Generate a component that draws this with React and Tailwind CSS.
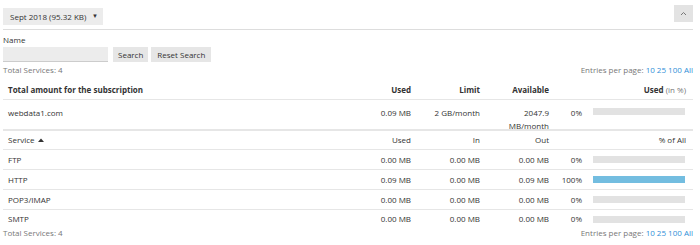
const rows = [
  { name: "FTP", used: "0.00 MB", inn: "0.00 MB", out: "0.00 MB", pct: 0 },
  { name: "HTTP", used: "0.09 MB", inn: "0.00 MB", out: "0.09 MB", pct: 100 },
  { name: "POP3/IMAP", used: "0.00 MB", inn: "0.00 MB", out: "0.00 MB", pct: 0 },
  { name: "SMTP", used: "0.00 MB", inn: "0.00 MB", out: "0.00 MB", pct: 0 },
];

const cols = "grid grid-cols-[1fr_65px_69px_69px_35px_105px]";

function Bar({ pct }) {
  return (
    <div className="h-[7px] w-[92px] bg-[#e2e2e2]">
      <div className="h-full bg-[#73bde0]" style={{ width: `${pct}%` }} />
    </div>
  );
}

function Entries() {
  return (
    <span className="text-[#777]">
      Entries per page: <span className="text-[#2f8fd8]">10 25 100 All</span>
    </span>
  );
}

export default function App() {
  return (
    <div
      className="w-[700px] h-[245px] bg-white text-[8px] text-[#333] overflow-hidden"
      style={{ fontFamily: '"Open Sans", sans-serif' }}
    >
      {/* Top bar */}
      <div className="flex justify-between items-start mx-[3px] pt-[5px] pb-[4px] border-b border-[#ddd] w-[690px]">
        <div className="mt-[3px] h-[17px] w-[100px] bg-[#ececec] flex items-center justify-between pl-[7px] pr-[5px]">
          <span>Sept 2018 (95.32 KB)</span>
          <span className="text-[6px]">▼</span>
        </div>
        <div className="h-[17px] w-[19px] bg-[#e3e3e3] flex items-center justify-center">
          <svg width="7" height="5" viewBox="0 0 7 5" fill="none" stroke="#777" strokeWidth="1">
            <path d="M1 4 L3.5 1.5 L6 4" />
          </svg>
        </div>
      </div>

      {/* Search */}
      <div className="px-[3px] pt-[4px]">
        <div className="leading-[12px]">Name</div>
        <div className="flex gap-[3px] mt-[1px]">
          <div className="w-[105px] h-[15px] bg-[#ececec] border-b border-[#ccc] mr-[2px]" />
          <div className="h-[15px] px-[5px] bg-[#e6e6e6] flex items-center">Search</div>
          <div className="h-[15px] px-[6px] bg-[#e6e6e6] flex items-center">Reset Search</div>
        </div>
        <div className="flex justify-between items-center w-[690px] mt-[1px] leading-[14px]">
          <span className="text-[#777]">Total Services: 4</span>
          <Entries />
        </div>
      </div>

      {/* Table */}
      <div className="mx-[3px] w-[690px] mt-[3px]">
        <div className={`${cols} h-[20px] items-center border-b border-[#e6e6e6] font-bold`}>
          <div className="pl-[5px]">Total amount for the subscription</div>
          <div className="text-right pr-[4px]">Used</div>
          <div className="text-right pr-[4px]">Limit</div>
          <div className="text-right pr-[4px]">Available</div>
          <div />
          <div className="text-right pr-[7px]">
            Used <span className="font-normal text-[#777]">(in %)</span>
          </div>
        </div>
        <div className={`${cols} items-start h-[31px] pt-[6px] border-b-2 border-[#e6e6e6] leading-[13px]`}>
          <div className="pl-[5px]">webdata1.com</div>
          <div className="text-right pr-[4px]">0.09 MB</div>
          <div className="text-right pr-[4px]">2 GB/month</div>
          <div className="text-right pr-[4px]">
            2047.9
            <br />
            MB/month
          </div>
          <div className="text-right pr-[6px]">0%</div>
          <div className="pl-[5px] pt-[2px]">
            <Bar pct={0} />
          </div>
        </div>
        <div className={`${cols} h-[19px] items-center border-b border-[#e6e6e6]`}>
          <div className="pl-[5px] flex items-center gap-[3px]">
            Service
            <svg width="6" height="4" viewBox="0 0 6 4">
              <path d="M0 4 L3 0.5 L6 4 Z" fill="#333" />
            </svg>
          </div>
          <div className="text-right pr-[4px]">Used</div>
          <div className="text-right pr-[4px]">In</div>
          <div className="text-right pr-[4px]">Out</div>
          <div />
          <div className="text-right pr-[7px]">% of All</div>
        </div>
        {rows.map((r, i) => (
          <div
            key={r.name}
            className={`${cols} items-center ${i < rows.length - 1 ? "h-[20px] border-b border-[#e6e6e6]" : "h-[18px]"}`}
          >
            <div className="pl-[5px]">{r.name}</div>
            <div className="text-right pr-[4px]">{r.used}</div>
            <div className="text-right pr-[4px]">{r.inn}</div>
            <div className="text-right pr-[4px]">{r.out}</div>
            <div className="text-right pr-[6px]">{r.pct}%</div>
            <div className="pl-[5px]">
              <Bar pct={r.pct} />
            </div>
          </div>
        ))}
        <div className="flex justify-between items-center leading-[10px]">
          <span className="text-[#777]">Total Services: 4</span>
          <Entries />
        </div>
      </div>
    </div>
  );
}
